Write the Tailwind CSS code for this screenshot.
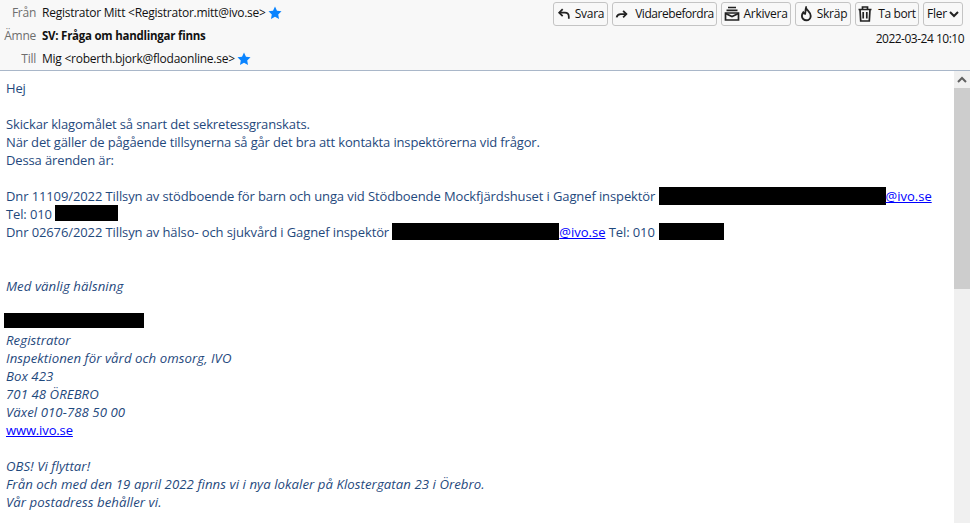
<!DOCTYPE html>
<html lang="sv">
<head>
    <meta charset="UTF-8">
    <title>SV: Fråga om handlingar finns</title>
    <script src="https://cdn.jsdelivr.net/npm/@tailwindcss/browser@4"></script>
</head>
<body class="w-[970px] h-[523px] overflow-hidden bg-white font-['Open_Sans',sans-serif]">
    <!-- Message header -->
    <header class="h-[71px] bg-[#f8f8f8] border-b border-[#a9b7c9] flex text-[12px] tracking-[-0.25px] text-[#111]">
        <div class="w-[36px] shrink-0 flex flex-col items-end text-[#6e6e6e] pt-[3px] leading-[20px] gap-[3px]">
            <div class="h-[20px]">Från</div>
            <div class="h-[20px]">Ämne</div>
            <div class="h-[20px]">Till</div>
        </div>
        <div class="flex-1 pl-[6px] pt-[3px] flex flex-col gap-[3px] leading-[20px] whitespace-nowrap">
            <div class="h-[20px] flex items-center gap-[2px]">
                <span>Registrator Mitt &lt;Registrator.mitt@ivo.se&gt;</span>
                <svg class="w-[14px] h-[14px]" viewBox="0 0 24 24"><path fill="#0a84ff" d="M12 1l3.400 7 7.800 1.100-5.700 5.400 1.400 7.800L12 18.600 5.100 22.300l1.400-7.800L.8 9.100 8.600 8z"/></svg>
            </div>
            <div class="h-[20px] font-bold text-[11.5px]">SV: Fråga om handlingar finns</div>
            <div class="h-[20px] flex items-center gap-[2px]">
                <span>Mig &lt;roberth.bjork@flodaonline.se&gt;</span>
                <svg class="w-[14px] h-[14px]" viewBox="0 0 24 24"><path fill="#0a84ff" d="M12 1l3.400 7 7.800 1.100-5.700 5.400 1.400 7.800L12 18.600 5.100 22.300l1.400-7.800L.8 9.100 8.600 8z"/></svg>
            </div>
        </div>
        <div class="flex flex-col items-end pr-[6px] pt-[2px]">
            <div class="flex gap-[4px] h-[24px] mr-[1px]">
                <button class="h-[24px] w-[55px] rounded-[3px] border border-[#c4c4c4] bg-[#f8f8f8] flex items-center justify-center gap-[4px]">
                    <svg class="w-[14px] h-[14px]" viewBox="0 0 16 16" fill="none" stroke="#222" stroke-width="2"><path d="M6.500 2.500L2.500 6.500l4 4"/><path d="M3 6.500h6c3 0 4.500 2 4.500 4.500v2.500"/></svg>
                    Svara
                </button>
                <button class="h-[24px] w-[105px] rounded-[3px] border border-[#c4c4c4] bg-[#f8f8f8] flex items-center justify-center gap-[7px] tracking-[-0.45px]">
                    <svg class="w-[13px] h-[13px]" viewBox="0 0 16 16" fill="none" stroke="#222" stroke-width="2.200"><path d="M10 3.500l4 4-4 4"/><path d="M14 7.500H7c-3 0-4.500 1.500-5 4"/></svg>
                    Vidarebefordra
                </button>
                <button class="h-[24px] w-[70px] rounded-[3px] border border-[#c4c4c4] bg-[#f8f8f8] flex items-center justify-center gap-[3px]">
                    <svg class="w-[16px] h-[16px]" viewBox="0 0 16 16" fill="none" stroke="#222" stroke-width="1.700"><path d="M4 1.500h8M2.500 4.300h11"/><path d="M1.500 7h13v7h-13z"/><path d="M1.500 7.500L8 10.500l6.500-3"/></svg>
                    Arkivera
                </button>
                <button class="h-[24px] w-[56px] rounded-[3px] border border-[#c4c4c4] bg-[#f8f8f8] flex items-center justify-center gap-[3px]">
                    <svg class="w-[15px] h-[16px]" viewBox="0 0 16 16" fill="none" stroke="#222" stroke-width="2"><path d="M7.500 1.500c.5 2.500 5 4.500 5 8.500a4.700 4.700 0 0 1-9.400 0c0-1.500.5-2.700 1.400-3.700.4 1 1 1.500 2 1.500C7 5.800 6.800 3.500 7.500 1.500z"/></svg>
                    Skräp
                </button>
                <button class="h-[24px] w-[64px] rounded-[3px] border border-[#c4c4c4] bg-[#f8f8f8] flex items-center justify-center gap-[6px] tracking-[-0.4px]">
                    <svg class="w-[14px] h-[16px]" viewBox="0 0 14 16" fill="none" stroke="#222" stroke-width="1.700"><path d="M.5 3.500h13M4.500 3V1h5v2"/><path d="M2 3.500l.7 11.500h8.600L12 3.500"/><path d="M5.200 6v6.500M8.800 6v6.500"/></svg>
                    Ta bort
                </button>
                <button class="h-[24px] w-[40px] rounded-[3px] border border-[#c4c4c4] bg-[#f8f8f8] flex items-center justify-center gap-[2px]">
                    Fler
                    <svg class="w-[10px] h-[10px]" viewBox="0 0 10 10" fill="none" stroke="#222" stroke-width="2"><path d="M1 3l4 4 4-4"/></svg>
                </button>
            </div>
            <div class="mt-[4px] leading-[18px] whitespace-nowrap tracking-[-0.5px]">2022-03-24 10:10</div>
        </div>
    </header>

    <!-- Message body with scrollbar -->
    <div class="flex h-[452px]">
        <main class="flex-1 overflow-hidden pl-[6px] pt-[8px] text-[13px] leading-[18px] tracking-[-0.13px] text-[#1f497d] whitespace-nowrap">
            <p>Hej</p>
            <p>&nbsp;</p>
            <p>Skickar klagomålet så snart det sekretessgranskats.</p>
            <p class="tracking-[-0.15px]">När det gäller de pågående tillsynerna så går det bra att kontakta inspektörerna vid frågor.</p>
            <p>Dessa ärenden är:</p>
            <p>&nbsp;</p>
            <p class="tracking-[-0.11px]">Dnr 11109/2022 Tillsyn av stödboende för barn och unga vid Stödboende Mockfjärdshuset i Gagnef inspektör <span class="inline-block w-[227px] h-[18px] bg-black align-top"></span><a href="#" class="text-[#0000ff] underline tracking-[0px]">@ivo.se</a></p>
            <p>Tel: 010 <span class="inline-block w-[63px] h-[16px] bg-black align-top"></span></p>
            <p class="tracking-[-0.11px]">Dnr 02676/2022 Tillsyn av hälso- och sjukvård i Gagnef inspektör <span class="inline-block w-[167px] h-[17px] bg-black align-top"></span><a href="#" class="text-[#0000ff] underline tracking-[0px]">@ivo.se</a> Tel: 010 <span class="inline-block w-[65px] h-[17px] ml-[1px] bg-black align-top"></span></p>
            <p>&nbsp;</p>
            <p>&nbsp;</p>
            <div class="italic text-[13.2px] tracking-[0.06px]">
                <p>Med vänlig hälsning</p>
                <p>&nbsp;</p>
                <p class="-ml-[2px]"><span class="inline-block w-[140px] h-[15px] bg-black align-top"></span></p>
                <p>Registrator</p>
                <p>Inspektionen för vård och omsorg, IVO</p>
                <p>Box 423</p>
                <p>701 48 ÖREBRO</p>
                <p>Växel 010-788 50 00</p>
                <p><a href="#" class="text-[#0000ff] underline not-italic tracking-[-0.13px] text-[13px]">www.ivo.se</a></p>
                <p>&nbsp;</p>
                <p>OBS! Vi flyttar!</p>
                <p>Från och med den 19 april 2022 finns vi i nya lokaler på Klostergatan 23 i Örebro.</p>
                <p>Vår postadress behåller vi.</p>
            </div>
        </main>
        <aside class="w-[16px] shrink-0 bg-[#f0f0f0] flex flex-col">
            <div class="h-[17px] flex items-center justify-center">
                <svg class="w-[10px] h-[8px]" viewBox="0 0 10 8" fill="none" stroke="#606060" stroke-width="2"><path d="M1 6l4-4 4 4"/></svg>
            </div>
            <div class="h-[201px] bg-[#cdcdcd]"></div>
        </aside>
    </div>
</body>
</html>
